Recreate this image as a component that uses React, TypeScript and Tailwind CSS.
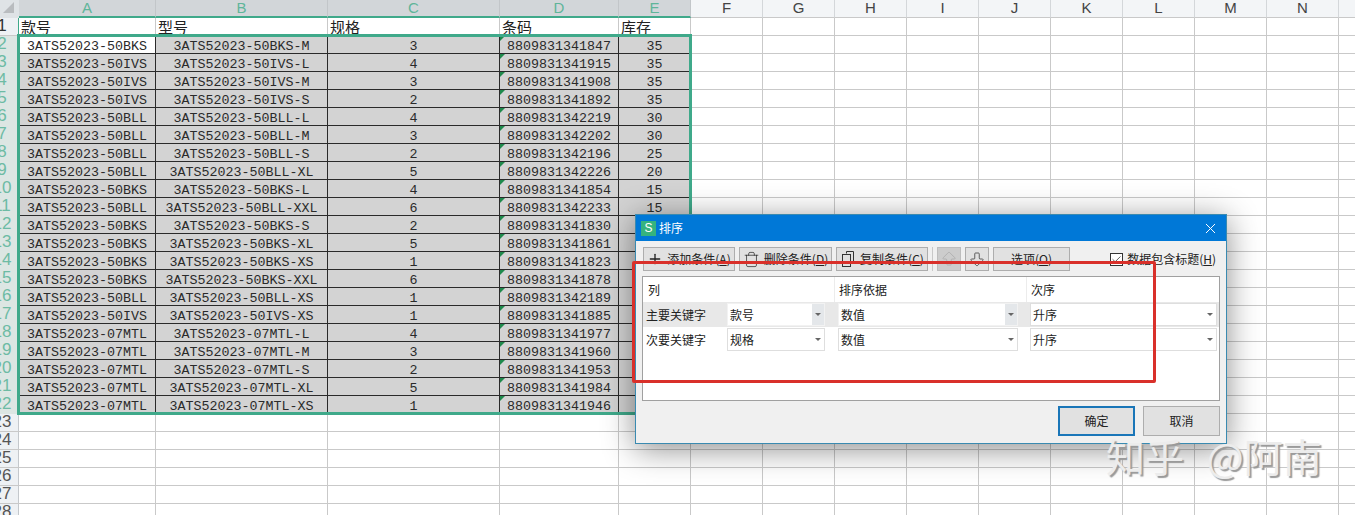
import React from 'react';
import { ArrowBigDown, ArrowBigUp, Check, Plus, Trash, X } from 'lucide-react';

const mono = "font-['Liberation_Mono','Noto_Sans_CJK_SC',monospace]";
const cjk = "font-['Noto_Sans_CJK_SC','Liberation_Sans',sans-serif]";

const colWidths = ['w-[137px]', 'w-[172px]', 'w-[172px]', 'w-[119px]', 'w-[72px]'];
const emptyCols = ['F', 'G', 'H', 'I', 'J', 'K', 'L', 'M', 'N', 'O'];
const titles = ['款号', '型号', '规格', '条码', '库存'];

const rows: [string, string, number, string, number][] = [
  ['50BKS', 'M', 3, '8809831341847', 35],
  ['50IVS', 'L', 4, '8809831341915', 35],
  ['50IVS', 'M', 3, '8809831341908', 35],
  ['50IVS', 'S', 2, '8809831341892', 35],
  ['50BLL', 'L', 4, '8809831342219', 30],
  ['50BLL', 'M', 3, '8809831342202', 30],
  ['50BLL', 'S', 2, '8809831342196', 25],
  ['50BLL', 'XL', 5, '8809831342226', 20],
  ['50BKS', 'L', 4, '8809831341854', 15],
  ['50BLL', 'XXL', 6, '8809831342233', 15],
  ['50BKS', 'S', 2, '8809831341830', 15],
  ['50BKS', 'XL', 5, '8809831341861', 15],
  ['50BKS', 'XS', 1, '8809831341823', 15],
  ['50BKS', 'XXL', 6, '8809831341878', 15],
  ['50BLL', 'XS', 1, '8809831342189', 15],
  ['50IVS', 'XS', 1, '8809831341885', 15],
  ['07MTL', 'L', 4, '8809831341977', 10],
  ['07MTL', 'M', 3, '8809831341960', 10],
  ['07MTL', 'S', 2, '8809831341953', 10],
  ['07MTL', 'XL', 5, '8809831341984', 10],
  ['07MTL', 'XS', 1, '8809831341946', 10],
];

const RowNumber = ({ n, tone }: { n: number; tone: 'title' | 'picked' | 'plain' }) => (
  <div
    className={`w-[19px] shrink-0 h-full overflow-hidden border-r ${
      tone === 'picked'
        ? 'bg-[#dce6e3] border-[#3fa98a] text-[#6dbba4]'
        : tone === 'title'
          ? 'bg-[#eef1f4] border-[#3fa98a] text-[#333]'
          : 'bg-[#eef1f4] border-[#c4c8cc] text-[#555]'
    }`}
  >
    <div className="-ml-[14px] w-[32px] text-center text-[17px] leading-[16px] font-['Liberation_Sans',sans-serif]">{n}</div>
  </div>
);

const EmptyCells = () => (
  <>
    {emptyCols.map(c => (
      <div key={c} className="w-[72px] shrink-0 h-full border-r border-[#c9c9c9]" />
    ))}
  </>
);

const Sheet = () => (
  <div className="flex flex-col">
    <div className="flex h-[18px]">
      <div className="w-[19px] shrink-0 bg-[#dfe3e6] flex items-end justify-end">
        <div className="w-0 h-0 border-l-[11px] border-l-transparent border-b-[11px] border-b-[#b9bcbf] mr-[5px] mb-[5px]" />
      </div>
      {['A', 'B', 'C', 'D', 'E'].map((c, i) => (
        <div key={c} className={`${colWidths[i]} shrink-0 bg-[#d2d6d9] border-b-2 border-[#3fa98a] border-r border-r-[#c2c6c9] text-[#5fb59a] text-center text-[15px] leading-[15px] font-['Liberation_Sans',sans-serif]`}>{c}</div>
      ))}
      {emptyCols.map(c => (
        <div key={c} className="w-[72px] shrink-0 bg-[#f3f5f7] border-b border-[#c9c9c9] border-r border-r-[#d4d7da] text-[#444] text-center text-[15px] leading-[15px] font-['Liberation_Sans',sans-serif]">{c}</div>
      ))}
    </div>

    <div className="flex h-[18px] border-b border-[#c9c9c9]">
      <RowNumber n={1} tone="title" />
      {titles.map((t, i) => (
        <div key={t} className={`${colWidths[i]} shrink-0 overflow-hidden border-r border-[#c9c9c9] pl-[2px] text-[15px] leading-[18px] text-[#222] ${cjk}`}>{t}</div>
      ))}
      <EmptyCells />
    </div>

    {rows.map((r, i) => {
      const cells = [`3ATS52023-${r[0]}`, `3ATS52023-${r[0]}-${r[1]}`, String(r[2]), r[3], String(r[4])];
      return (
        <div key={r[3]} className="flex h-[18px]">
          <RowNumber n={i + 2} tone="picked" />
          {cells.map((text, j) => (
            <div
              key={j}
              className={`${colWidths[j]} relative shrink-0 h-full overflow-hidden border-b border-r border-[#2a2a2a] text-center text-[13.33px] leading-[22px] text-[#2a2a2a] ${mono} ${i === 0 && j === 0 ? 'bg-white' : 'bg-[#d3d3d3]'}`}
            >
              {j === 3 && <div className="absolute left-0 top-0 w-0 h-0 border-t-[5px] border-t-[#1f8a4c] border-r-[5px] border-r-transparent" />}
              {text}
            </div>
          ))}
          <div className="flex h-full border-b border-[#c9c9c9]"><EmptyCells /></div>
        </div>
      );
    })}

    {[23, 24, 25, 26, 27, 28].map(n => (
      <div key={n} className="flex h-[18px] border-b border-[#c9c9c9]">
        <RowNumber n={n} tone="plain" />
        {colWidths.map((w, i) => (
          <div key={i} className={`${w} shrink-0 h-full border-r border-[#c9c9c9]`} />
        ))}
        <EmptyCells />
      </div>
    ))}
  </div>
);

const CopyIcon = () => (
  <svg width="16" height="18" viewBox="0 0 16 18" fill="none" stroke="#333" strokeWidth="1">
    <path d="M6.5 3.5V1.5H13.5V12.5H11" />
    <rect x="2.5" y="4.5" width="8" height="12" />
  </svg>
);

const ToolButton = ({ icon, label, hot, w }: { icon: React.ReactNode; label: string; hot: string; w: string }) => (
  <button className={`${w} h-[24px] flex items-center justify-center gap-[4px] bg-[#e1e1e1] border border-[#adadad] text-[12px] text-[#222] ${cjk}`}>
    {icon}
    <span>{label}(<span className="underline">{hot}</span>)</span>
  </button>
);

const Combo = ({ text, w, hover }: { text: string; w: string; hover?: boolean }) => (
  <div className={`${w} h-[23px] flex items-center justify-between bg-white border ${hover ? 'border-[#f2f2f2]' : 'border-[#dedede]'} text-[12px] text-[#222]`}>
    <span className="pl-[2px]">{text}</span>
    <span className={`h-full w-[12px] flex items-center justify-center ${hover ? 'bg-[#e4e7ea]' : ''}`}>
      <span className="w-0 h-0 border-x-[3px] border-x-transparent border-t-[3px] border-t-[#666]" />
    </span>
  </div>
);

const SortRow = ({ label, first, active }: { label: string; first: string; active?: boolean }) => (
  <div className={`flex h-[25px] items-center ${active ? 'bg-[#e8e8e8]' : 'bg-white'}`}>
    <div className="w-[84px] pl-[3px] text-[12px] text-[#222]">{label}</div>
    <Combo text={first} w="w-[98px]" hover={active} />
    <div className="w-[13px]" />
    <Combo text="数值" w="w-[180px]" hover={active} />
    <div className="w-[12px]" />
    <Combo text="升序" w="w-[187px]" />
  </div>
);

const SortDialog = () => (
  <div className={`absolute left-[635px] top-[214px] w-[592px] h-[230px] flex flex-col bg-[#f0f0f0] border border-[#3a8ab0] shadow-[0_5px_30px_rgba(0,0,0,0.45)] ${cjk}`}>
    <div className="h-[26px] shrink-0 flex items-center bg-[#0078d7] pl-[5px] pr-[7px]">
      <div className="w-[15px] h-[15px] flex items-center justify-center bg-[#35b37e] text-white text-[12px] font-['Liberation_Sans',sans-serif]">S</div>
      <span className="ml-[3px] text-[12px] text-white">排序</span>
      <X className="ml-auto text-white" size={17} strokeWidth={1.4} />
    </div>

    <div className="flex items-center mt-[6px] pl-[7px] pr-[10px]">
      <ToolButton w="w-[92px]" label="添加条件" hot="A" icon={<Plus size={16} strokeWidth={2} />} />
      <div className="w-[4px]" />
      <ToolButton w="w-[93px]" label="删除条件" hot="D" icon={<Trash size={17} strokeWidth={1} />} />
      <div className="w-[4px]" />
      <ToolButton w="w-[92px]" label="复制条件" hot="C" icon={<CopyIcon />} />
      <div className="w-px h-[24px] mx-[4px] bg-[#c8c8c8]" />
      <div className="w-[24px] h-[24px] flex items-center justify-center bg-[#cccccc] border border-[#bdbdbd] text-[#a8a8a8]"><ArrowBigUp size={18} strokeWidth={1} /></div>
      <div className="w-[4px]" />
      <div className="w-[24px] h-[24px] flex items-center justify-center bg-[#e1e1e1] border border-[#adadad] text-[#333]"><ArrowBigDown size={18} strokeWidth={1} /></div>
      <div className="w-[4px]" />
      <button className="w-[77px] h-[24px] bg-[#e1e1e1] border border-[#adadad] text-[12px] text-[#222]">选项(<span className="underline">O</span>)</button>
      <div className="ml-auto flex items-center gap-[4px] text-[12px] text-[#222]">
        <span className="w-[13px] h-[13px] flex items-center justify-center bg-white border border-[#333]"><Check size={11} strokeWidth={1.6} /></span>
        <span>数据包含标题(<span className="underline">H</span>)</span>
      </div>
    </div>

    <div className="mt-[5px] mx-[6px] h-[125px] bg-white border border-[#a0a0a0]">
      <div className="flex h-[25px] items-center text-[12px] text-[#222]">
        <div className="w-[192px] h-full pl-[5px] flex items-center border-r border-[#ececec]">列</div>
        <div className="w-[192px] h-full pl-[4px] flex items-center border-r border-[#ececec]">排序依据</div>
        <div className="pl-[4px]">次序</div>
      </div>
      <SortRow label="主要关键字" first="款号" active />
      <SortRow label="次要关键字" first="规格" />
    </div>

    <div className="flex justify-end gap-[8px] mt-[5px] pr-[6px]">
      <button className="w-[77px] h-[30px] bg-[#e1e1e1] border-2 border-[#1a76b8] text-[12px] text-[#222]">确定</button>
      <button className="w-[77px] h-[30px] bg-[#e1e1e1] border border-[#adadad] text-[12px] text-[#222]">取消</button>
    </div>
  </div>
);

const App = () => (
  <div className="relative w-[1355px] h-[515px] overflow-hidden bg-white">
    <Sheet />
    <div className="absolute left-[17px] top-[34px] w-[675px] h-[381px] border-[3px] border-[#3fa98a] pointer-events-none" />
    <SortDialog />
    <div className="absolute left-[632px] top-[261px] w-[524px] h-[122px] border-[3px] border-[#d9302a] rounded-[2px] pointer-events-none" />
    <div className={`absolute left-[1106px] top-[429px] whitespace-nowrap text-[39px] leading-[52px] [word-spacing:14px] font-normal text-[#ececec] [text-shadow:2px_2px_1px_#9a9a9a] ${cjk}`}>知乎 @阿南</div>
  </div>
);

export default App;
